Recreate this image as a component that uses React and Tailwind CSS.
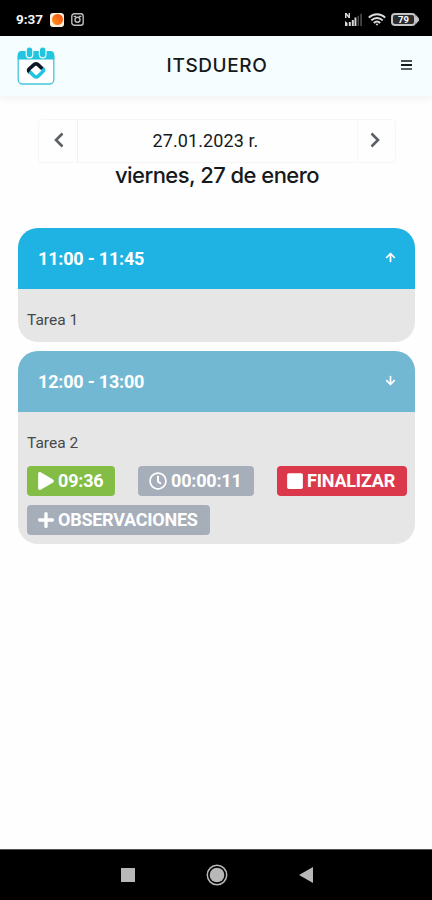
import { FaArrowDown, FaArrowUp, FaPlay, FaPlus, FaRegClock, FaSquare } from "react-icons/fa";

const TASKS = [
  { id: 1, hours: "11:00 - 11:45", name: "Tarea 1", open: false },
  { id: 2, hours: "12:00 - 13:00", name: "Tarea 2", open: true },
];

function StatusBar() {
  return (
    <div className="flex h-9 shrink-0 items-center bg-black pt-[3px] pr-[13px] pl-4 text-white">
      <span className="w-[27px] text-[13.5px] font-bold text-gray-100">9:37</span>
      <span className="ml-[7px] flex size-[14px] items-center justify-center rounded-[3px] bg-[#fff1df]">
        <span className="size-[11px] rounded-full bg-gradient-to-bl from-[#f4400c] to-[#ff9a1f]" />
      </span>
      <svg className="ml-[7px] size-[13px]" viewBox="0 0 13 13" fill="none" stroke="#bdbdbd" strokeWidth="1.4">
        <rect x="0.8" y="0.8" width="11.4" height="11.4" rx="2.5" />
        <circle cx="6.5" cy="6.8" r="2.5" />
        <path d="M2.6 3.4h2.6M7.8 3.4h2.6" />
      </svg>

      <svg className="ml-auto h-[13px] w-[18px]" viewBox="0 0 18 13">
        <g fill="#d8d8d8">
          <path d="M0 0h1.6l2 2.8V0H5v5H3.5L1.5 2.2V5H0z" />
          <path d="M0 8l2.5 2V13H0zM3.8 9h2v4h-2zM6.8 7h2v6h-2zM9.5 4.5h1.9V13H9.5z" />
        </g>
        <path d="M12.5 2.8H14V13h-1.5zM15.2 0.8H17V13h-1.8z" fill="#464646" />
      </svg>
      <svg className="ml-[5px] h-[13px] w-[18px]" viewBox="0 0 18 13" fill="none" stroke="#dcdcdc" strokeWidth="2">
        <path d="M0.8 4.6C5.5 0 12.5 0 17.2 4.6" />
        <path d="M3.3 7.4c3.3-3.2 8.1-3.2 11.4 0" />
        <path d="M5.8 10c1.9-1.8 4.5-1.8 6.4 0" />
        <path d="M7.4 10.8h3.2L9 12.8z" fill="#dcdcdc" stroke="none" />
      </svg>
      <div className="ml-[5px] flex items-center">
        <span className="flex h-[13px] w-[25px] items-center justify-center rounded-[4px] border-2 border-[#c4c4c4] bg-[#2c2c2c] text-[9.5px] leading-none font-bold text-white">
          79
        </span>
        <svg className="h-[9px] w-[3px]" viewBox="0 0 3 9">
          <path d="M0 0l3 3.5v2L0 9z" fill="#c4c4c4" />
        </svg>
      </div>
    </div>
  );
}

function Logo() {
  return (
    <svg className="h-[38px] w-[38px]" viewBox="0 0 38 38" fill="none">
      <rect x="1.2" y="4.7" width="35.6" height="32.3" rx="4.5" fill="#fff" stroke="#42c6de" strokeWidth="1.3" />
      <path d="M0.8 12.5V8a4 4 0 0 1 4-4h28.4a4 4 0 0 1 4 4v4.5z" fill="#22c4df" />
      <g fill="#22c4df" stroke="#eefcff" strokeWidth="1.2">
        <rect x="9.2" y="-0.2" width="6.6" height="11" rx="3.3" />
        <rect x="22.4" y="-0.2" width="6.6" height="11" rx="3.3" />
      </g>
      <path
        d="M12.8 25.2c-1.6-1.2-1.7-2.2-.4-3.4l4.6-4.2q2-1.6 4 0l4.6 4.4"
        stroke="#101726"
        strokeWidth="3.6"
      />
      <path
        d="m12.6 24.6 4.6 4.6q2 1.6 4 0l4.4-4.4c1.3-1.2 1.3-2.2.2-3.4"
        stroke="#22c4df"
        strokeWidth="3.6"
      />
    </svg>
  );
}

function Header() {
  return (
    <header className="grid h-[60px] shrink-0 grid-cols-[1fr_auto_1fr] items-center bg-[#f6fdfe] px-[17px] shadow-[0_2px_9px_rgba(0,0,0,0.06)]">
      <Logo />
      <h1 className="pl-[2px] font-['Inter','Open_Sans',sans-serif] text-[19px] font-medium tracking-[0.6px] text-[#16191b]">
        ITSDUERO
      </h1>
      <button
        type="button"
        className="mr-[3px] mb-[3px] flex h-[10px] w-[11px] flex-col justify-between justify-self-end"
      >
        <span className="h-[2px] w-full bg-[#4a4f51]" />
        <span className="h-[2px] w-full bg-[#16191b]" />
        <span className="h-[2px] w-full bg-[#5b6062]" />
      </button>
    </header>
  );
}

function Chevron({ d }) {
  return (
    <svg className="h-4 w-[10px]" viewBox="0 0 10 16" fill="none" stroke="#5c6064" strokeWidth="2.6">
      <path d={d} />
    </svg>
  );
}

function DatePicker() {
  return (
    <div className="mr-[36px] ml-[38px] mt-[23px] flex h-11 rounded-[4px] border border-[#f6f6f6]">
      <button type="button" className="flex w-[39px] items-center justify-center border-r border-[#f0f0f0] pl-px pb-[2px]">
        <Chevron d="M8.5 1.5 2 8l6.5 6.5" />
      </button>
      <div className="flex flex-1 items-center justify-center pr-[24px] pb-[2px] text-[18px] tracking-[0.1px] text-[#16191b]">
        27.01.2023 r.
      </div>
      <button type="button" className="flex w-[38px] items-center justify-center border-l border-[#f8f8f8] pr-[4px] pb-[2px]">
        <Chevron d="M1.5 1.5 8 8l-6.5 6.5" />
      </button>
    </div>
  );
}

function Badge({ icon, color, children }) {
  return (
    <button
      type="button"
      className={`flex h-[30px] items-center rounded-[4px] text-[18px] leading-none font-bold whitespace-nowrap text-white ${color}`}
    >
      {icon}
      {children}
    </button>
  );
}

function TaskCard({ task }) {
  const Arrow = task.open ? FaArrowDown : FaArrowUp;
  return (
    <section className="overflow-hidden rounded-[20px] bg-[#e6e6e6]">
      <div
        className={`flex h-[61px] items-center justify-between pr-[19px] pl-5 text-white ${
          task.open ? "bg-[#72b8d3]" : "bg-[#1fb3e3]"
        }`}
      >
        <span className="text-[18px] font-bold tracking-[-0.2px]">{task.hours}</span>
        <Arrow className="mb-[3px] size-[11px]" />
      </div>
      <div className={task.open ? "px-[9px] pt-[22px] pb-[9px]" : "h-[53px] px-[9px] pt-[22px]"}>
        <p className="text-[15.5px] leading-[19px] text-[#45484a]">{task.name}</p>
        {task.open && (
          <>
            <div className="-mr-px mt-[13px] flex justify-between">
              <Badge color="w-[88px] gap-1 pl-[11px] tracking-[-0.2px] bg-[#83bd45]" icon={<FaPlay className="h-[18px] w-4 shrink-0" />}>
                09:36
              </Badge>
              <Badge color="w-[116px] gap-1 pl-[11px] tracking-[-0.2px] bg-[#a6aeba]" icon={<FaRegClock className="size-[18px] shrink-0" />}>
                00:00:11
              </Badge>
              <Badge color="w-[130px] gap-[3px] pl-[9px] tracking-[-0.2px] bg-[#dc384b]" icon={<FaSquare className="size-[18px] shrink-0" />}>
                FINALIZAR
              </Badge>
            </div>
            <div className="mt-[9px] flex">
              <Badge color="w-[183px] gap-1 pl-[11px] tracking-[-0.25px] bg-[#a6aeba]" icon={<FaPlus className="h-[18px] w-4 shrink-0" />}>
                OBSERVACIONES
              </Badge>
            </div>
          </>
        )}
      </div>
    </section>
  );
}

function NavBar() {
  return (
    <nav className="grid h-[51px] shrink-0 grid-cols-3 items-center border-t border-[#555] bg-black pr-[82px] pl-[83px] text-[#b8b8b8]">
      <span className="size-[14px] justify-self-center bg-current" />
      <svg className="size-[22px] justify-self-center" viewBox="0 0 22 22">
        <circle cx="11" cy="11" r="9.7" fill="none" stroke="currentColor" strokeWidth="1.5" />
        <circle cx="11" cy="11" r="7.3" fill="currentColor" />
      </svg>
      <svg className="h-4 w-[14px] justify-self-center" viewBox="0 0 14 16">
        <path d="M14 0v16L0 8z" fill="currentColor" />
      </svg>
    </nav>
  );
}

export default function App() {
  return (
    <div className="flex h-[900px] w-[432px] flex-col overflow-hidden bg-[#fefefe] font-['Roboto',sans-serif]">
      <StatusBar />
      <Header />
      <main className="flex-1">
        <DatePicker />
        <h2 className="h-[65px] pl-[2px] text-center font-['Inter','Open_Sans',sans-serif] text-[22px] leading-[24px] font-medium tracking-[-0.55px] text-[#16191b]">
          viernes, 27 de enero
        </h2>
        <div className="flex flex-col gap-[9px] pr-[17px] pl-[18px]">
          {TASKS.map((task) => (
            <TaskCard key={task.id} task={task} />
          ))}
        </div>
      </main>
      <NavBar />
    </div>
  );
}
